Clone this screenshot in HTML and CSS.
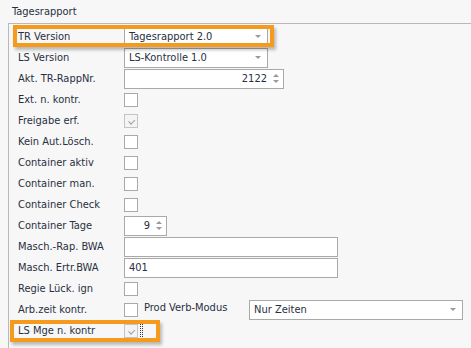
FILE: index.html
```html
<!DOCTYPE html>
<html lang="de">
<head>
  <meta charset="UTF-8" />
  <title>Tagesrapport</title>
  <link rel="stylesheet" href="styles.css">
</head>
<body>
  <div class="group">
    <div class="caption">Tagesrapport</div>
    <div class="frame">
      <div class="form">
        <label>TR Version</label>
        <div class="combo wide"><span>Tagesrapport 2.0</span><i class="arrow"></i></div>

        <label>LS Version</label>
        <div class="combo wide"><span>LS-Kontrolle 1.0</span><i class="arrow"></i></div>

        <label>Akt. TR-RappNr.</label>
        <div class="spin long"><span>2122</span><i class="spinner"><b class="up"></b><b class="down"></b></i></div>

        <label>Ext. n. kontr.</label>
        <div><span class="check"></span></div>

        <label>Freigabe erf.</label>
        <div><span class="check on"></span></div>

        <label>Kein Aut.Lösch.</label>
        <div><span class="check"></span></div>

        <label>Container aktiv</label>
        <div><span class="check"></span></div>

        <label>Container man.</label>
        <div><span class="check"></span></div>

        <label>Container Check</label>
        <div><span class="check"></span></div>

        <label>Container Tage</label>
        <div class="spin short"><span>9</span><i class="spinner"><b class="up"></b><b class="down"></b></i></div>

        <label>Masch.-Rap. BWA</label>
        <div class="text"></div>

        <label>Masch. Ertr.BWA</label>
        <div class="text">401</div>

        <label>Regie Lück. ign</label>
        <div><span class="check"></span></div>

        <label>Arb.zeit kontr.</label>
        <div class="inline">
          <span class="check"></span>
          <span class="sub">Prod Verb-Modus</span>
          <div class="combo mode"><span>Nur Zeiten</span><i class="arrow"></i></div>
        </div>

        <label>LS Mge n. kontr</label>
        <div class="inline"><span class="check on"></span><span class="focus"></span></div>
      </div>

      <div class="mark mark-tr"></div>
      <div class="mark mark-ls"></div>
    </div>
  </div>
</body>
</html>
```

FILE: styles.css
```css
body {
  margin: 0;
  background: #f7f7f7;
  font-family: "DejaVu Sans Condensed", "DejaVu Sans", sans-serif;
  font-stretch: condensed;
  font-size: 11px;
  color: #27303f;
  width: 471px;
  height: 348px;
  overflow: hidden;
}
.group {
  padding: 5px 0 0 8px;
}
.caption {
  padding-left: 4px;
  height: 18px;
  line-height: 14px;
}
.frame {
  position: relative;
  border-top: 1px solid #b9b9b9;
  border-left: 1px solid #b9b9b9;
  height: 340px;
}
.form {
  display: grid;
  grid-template-columns: 106px auto;
  grid-auto-rows: 21px;
  padding: 2px 0 0 9px;
  align-items: center;
}
label {
  line-height: 14px;
}
.combo, .spin, .text {
  box-sizing: border-box;
  height: 20px;
  background: #fff;
  border: 1px solid #a9a9a9;
  display: flex;
  align-items: center;
  padding: 0 4px;
}
.combo span { flex: 1; }
.wide { width: 144px; }
.long { width: 160px; }
.short { width: 43px; }
.text { width: 214px; }
.mode { width: 214px; margin-left: auto; }
.arrow {
  width: 0;
  height: 0;
  border-left: 3px solid transparent;
  border-right: 3px solid transparent;
  border-top: 3px solid #9a9a9a;
  margin-right: 2px;
}
.spin span {
  flex: 1;
  text-align: right;
  padding-right: 6px;
}
.spinner {
  display: flex;
  flex-direction: column;
  gap: 3px;
}
.spinner b {
  width: 0;
  height: 0;
  border-left: 3px solid transparent;
  border-right: 3px solid transparent;
}
.spinner .up { border-bottom: 3px solid #9a9a9a; }
.spinner .down { border-top: 3px solid #9a9a9a; }
.check {
  display: block;
  box-sizing: border-box;
  width: 14px;
  height: 14px;
  background: #fff;
  border: 1px solid #a9a9a9;
  position: relative;
}
.check.on {
  background: #f4f4f4;
  border-color: #c4c4c4;
}
.check.on::after {
  content: "";
  position: absolute;
  left: 3px;
  top: 2px;
  width: 5px;
  height: 3px;
  border-left: 1px solid #9d9d9d;
  border-bottom: 1px solid #9d9d9d;
  transform: rotate(-45deg) translate(-1px, 2px);
}
.inline {
  display: flex;
  align-items: center;
  width: 339px;
}
.sub {
  margin-left: 6px;
  margin-top: -4px;
}
.focus {
  width: 1px;
  height: 13px;
  margin-left: 2px;
  border-left: 1px dotted #333;
  border-right: 1px dotted #333;
}
.mark {
  position: absolute;
  border: 4px solid #f59a1c;
  box-shadow: 2px 3px 3px rgba(0,0,0,0.25);
}
.mark-tr {
  left: 4px;
  top: 1px;
  width: 253px;
  height: 14px;
}
.mark-ls {
  left: 1px;
  top: 296px;
  width: 142px;
  height: 14px;
}
```
